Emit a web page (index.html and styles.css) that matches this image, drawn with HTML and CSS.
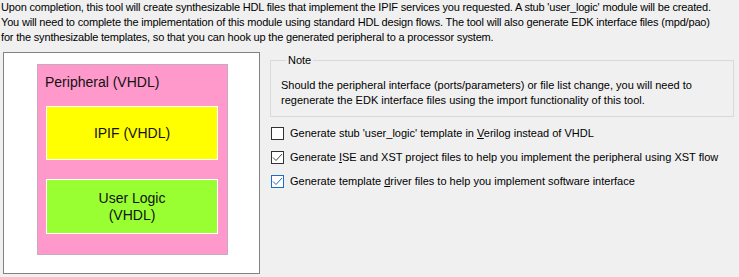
FILE: index.html
```html
<!DOCTYPE html>
<html lang="en">
<head>
  <meta charset="UTF-8" />
  <title>Peripheral templates</title>
  <link rel="stylesheet" href="styles.css">
</head>
<body>

<p class="intro">
  Upon completion, this tool will create synthesizable HDL files that implement the IPIF services you requested. A stub 'user_logic' module will be created.<br>
  You will need to complete the implementation of this module using standard HDL design flows. The tool will also generate EDK interface files (mpd/pao)<br>
  for the synthesizable templates, so that you can hook up the generated peripheral to a processor system.
</p>

<div class="main">
  <div class="canvas">
    <div class="periph">
      <div class="periph-title">Peripheral (VHDL)</div>
      <div class="block ipif">IPIF (VHDL)</div>
      <div class="block user">User Logic<br>(VHDL)</div>
    </div>
  </div>

  <div class="options">
    <fieldset class="note">
      <legend>Note</legend>
      <p>Should the peripheral interface (ports/parameters) or file list change, you will need to<br>
      regenerate the EDK interface files using the import functionality of this tool.</p>
    </fieldset>

    <label class="opt">
      <span class="box"></span>
      <span>Generate stub 'user_logic' template in <u>V</u>erilog instead of VHDL</span>
    </label>
    <label class="opt">
      <span class="box checked">
        <svg width="11" height="11" viewBox="0 0 11 11"><path d="M1 5.5 L4 8.5 L10 2" fill="none" stroke="#444" stroke-width="1"/></svg>
      </span>
      <span>Generate <u>I</u>SE and XST project files to help you implement the peripheral using XST flow</span>
    </label>
    <label class="opt">
      <span class="box checked focus">
        <svg width="11" height="11" viewBox="0 0 11 11"><path d="M1 5.5 L4 8.5 L10 2" fill="none" stroke="#1a6fc4" stroke-width="1"/></svg>
      </span>
      <span>Generate template <u>d</u>river files to help you implement software interface</span>
    </label>
  </div>
</div>

</body>
</html>
```

FILE: styles.css
```css
* { margin: 0; padding: 0; box-sizing: border-box; }
body { font-family: 'Liberation Sans', Arial, sans-serif; font-size: 11px; background: #f0f0f0; color: #000; width: 739px; height: 277px; overflow: hidden; }

.intro { padding-left: 1px; line-height: 15px; white-space: nowrap; margin-bottom: 7px; letter-spacing: -0.18px; }

.main { display: flex; align-items: flex-start; }

.canvas {
  margin-left: 3px; width: 257px; height: 222px;
  background: #fff; border: 1px solid #828282;
  padding: 11px 0 0 33px;
}
.periph {
  width: 191px; height: 191px; background: #ff99cc;
  border: 1px solid #c9aabd;
  padding: 9px 0 0 8px;
  font-size: 14px; color: #111;
}
.periph-title { line-height: 16px; margin-left: -1px; }
.block {
  width: 172px; border: 1px solid #fff;
  display: flex; align-items: center; justify-content: center; text-align: center;
  line-height: 17px;
}
.ipif { background: #ffff00; height: 54px; margin-top: 16px; }
.user { background: #99ff33; height: 55px; margin-top: 19px; }

.options { margin-left: 10px; width: 464px; }

.note {
  margin-top: 1px; border: 1px solid #d9d9d9;
  padding: 10px 0 8px 10px;
}
.note legend { padding: 0 2px; margin-left: 5px; line-height: 15px; }
.note p { line-height: 15px; white-space: nowrap; }

.opt { display: flex; align-items: center; gap: 6px; height: 24px; margin-left: 1px; }
.opt:first-of-type { margin-top: 4px; }
.box {
  width: 13px; height: 13px; border: 1px solid #333; background: #fff;
  display: flex; align-items: center; justify-content: center;
}
.box.focus { border-color: #1a6fc4; }
```
